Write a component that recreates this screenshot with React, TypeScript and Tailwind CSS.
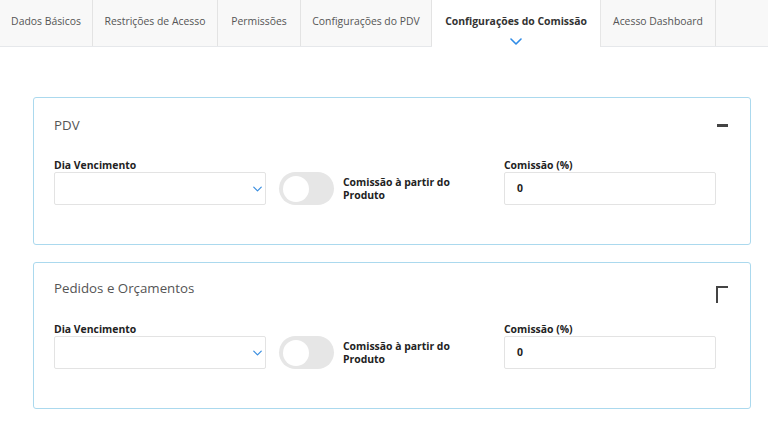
import React from "react";

const tabs = [
  { label: "Dados Básicos", w: "w-[93px]" },
  { label: "Restrições de Acesso", w: "w-[125px]" },
  { label: "Permissões", w: "w-[83px]" },
  { label: "Configurações do PDV", w: "w-[131px]" },
  { label: "Configurações do Comissão", w: "w-[169px]", active: true },
  { label: "Acesso Dashboard", w: "w-[115px]" },
];

function Chevron({ className }: { className?: string }) {
  return (
    <svg viewBox="0 0 12 7" className={className} fill="none">
      <path d="M1 1 L6 6 L11 1" stroke="currentColor" strokeWidth="1.6" strokeLinecap="round" strokeLinejoin="round" />
    </svg>
  );
}

function Card({ title, collapsed }: { title: string; collapsed?: boolean }) {
  return (
    <div className={`border border-[#abd9ee] rounded-[3px] bg-white px-[20px] pb-[39px] ${collapsed ? "pt-[15px]" : "pt-[17px]"}`}>
      <div className="flex justify-between items-start h-[20px]">
        <div className="text-[13.3px] leading-[20px] text-[#555]">{title}</div>
        {collapsed ? (
          <div className="relative w-[12px] h-[18px] mr-[2px] mt-[8px]">
            <div className="absolute left-0 top-0 w-[12px] h-[2px] bg-[#444]" />
            <div className="absolute left-0 top-0 w-[2px] h-[17px] bg-[#444]" />
          </div>
        ) : (
          <div className="w-[11px] h-[3px] bg-[#444] mr-[2px] mt-[9px]" />
        )}
      </div>
      <div className={`grid grid-cols-[225px_225px_1fr] ${collapsed ? "mt-[25px]" : "mt-[24px]"}`}>
        <div>
          <div className="text-[10.4px] leading-[13px] font-bold text-[#222]">Dia Vencimento</div>
          <div className="w-[212px] h-[33px] border border-[#e3e3e3] rounded-[2px] flex items-center justify-end pr-[2px]">
            <Chevron className="w-[9px] h-[6px] text-[#3a8ee0] mr-[1px] mt-[1px]" />
          </div>
        </div>
        <div className="flex items-start pt-[13px]">
          <div className="w-[55px] h-[33px] rounded-full bg-[#e6e6e6] flex items-center pl-[4px] shrink-0">
            <div className="w-[26px] h-[26px] rounded-full bg-white" />
          </div>
          <div className="ml-[9px] text-[10.4px] leading-[13px] font-bold text-[#222] mt-[4px] w-[125px]">
            Comissão à partir do Produto
          </div>
        </div>
        <div>
          <div className="text-[10.4px] leading-[13px] font-bold text-[#222]">Comissão (%)</div>
          <div className="w-[212px] h-[33px] border border-[#e3e3e3] rounded-[2px] flex items-center pl-[12px] text-[10.4px] font-bold text-[#222]">
            0
          </div>
        </div>
      </div>
    </div>
  );
}

export default function App() {
  return (
    <div className="w-[768px] h-[423px] bg-white overflow-hidden" style={{ fontFamily: '"Open Sans", "Noto Sans", sans-serif' }}>
      <div className="flex h-[47px] bg-[#f8f8f8] border-b border-[#e6e8eb]">
        {tabs.map((t) =>
          t.active ? (
            <div key={t.label} className={`${t.w} h-[47px] bg-white border-r border-[#e6e6e6] flex flex-col items-center relative`}>
              <div className="text-[10.4px] font-bold text-[#333] mt-[13px] leading-[16px] whitespace-nowrap">{t.label}</div>
              <Chevron className="absolute left-[78px] top-[38px] w-[12px] h-[7px] text-[#2f8be6]" />
            </div>
          ) : (
            <div key={t.label} className={`${t.w} h-[46px] border-r border-[#e3e3e3] flex justify-center`}>
              <div className="text-[10.4px] text-[#555] mt-[13px] leading-[16px] whitespace-nowrap">{t.label}</div>
            </div>
          )
        )}
      </div>
      <div className="ml-[33px] mr-[17px] mt-[50px] flex flex-col gap-[17px]">
        <Card title="PDV" />
        <Card title="Pedidos e Orçamentos" collapsed />
      </div>
    </div>
  );
}
